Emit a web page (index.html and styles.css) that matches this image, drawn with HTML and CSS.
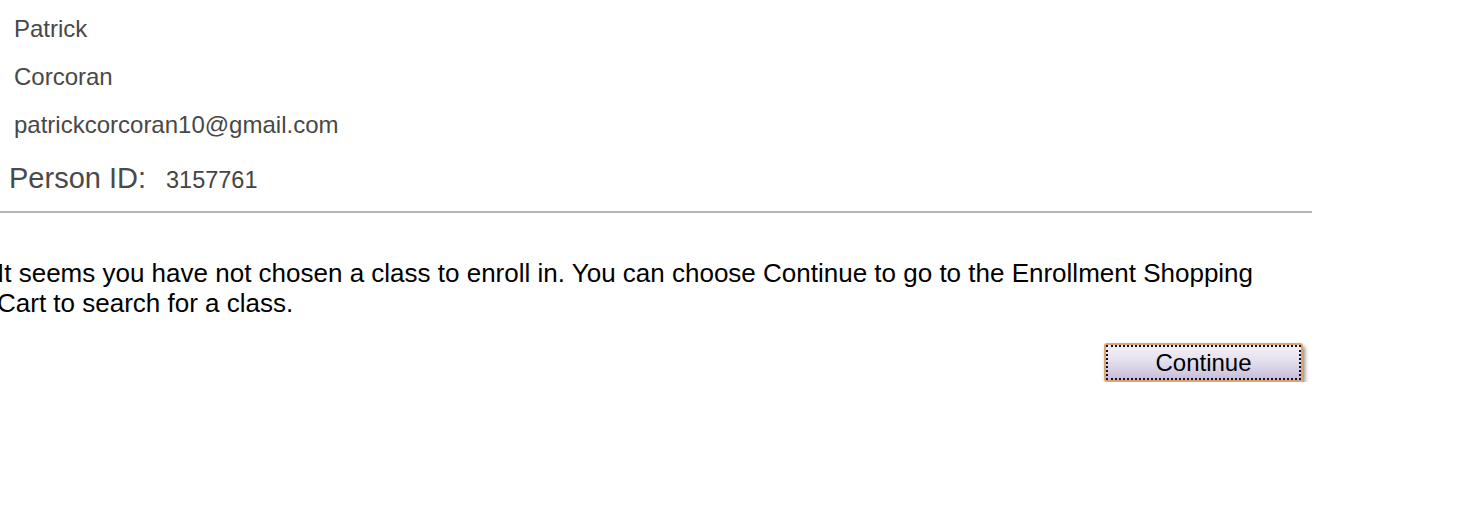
FILE: index.html
```html
<!DOCTYPE html>
<html lang="en">
<head>
<meta charset="utf-8">
<title>Enrollment</title>
<link rel="stylesheet" href="styles.css">
</head>
<body>
<div class="page">
  <div class="profile">
    <div class="field">Patrick</div>
    <div class="field">Corcoran</div>
    <div class="field">patrickcorcoran10@gmail.com</div>
    <div class="person">
      <span class="person-label">Person ID:</span>
      <span class="person-value">3157761</span>
    </div>
  </div>
  <hr class="divider">
  <p class="message">It seems you have not chosen a class to enroll in. You can choose Continue to go to the Enrollment Shopping Cart to search for a class.</p>
  <div class="actions">
    <button class="btn" type="button"><span class="btn-focus">Continue</span></button>
  </div>
</div>
</body>
</html>
```

FILE: styles.css
```css
html, body {
  margin: 0;
  padding: 0;
  background: #ffffff;
}

body {
  font-family: "Liberation Sans", Arial, Helvetica, sans-serif;
  overflow: hidden;
}

.page {
  width: 1312px;
}

.profile {
  padding-top: 5px;
  padding-left: 14px;
  color: #484848;
}

.field {
  font-size: 24px;
  line-height: 48px;
  height: 48px;
}

.person {
  display: flex;
  align-items: baseline;
  gap: 20px;
  margin-left: -5px;
  margin-top: 5px;
  height: 48px;
  line-height: 48px;
}

.person-label {
  font-size: 29px;
  color: #4a4a4a;
}

.person-value {
  font-size: 23.5px;
  color: #444444;
}

.divider {
  margin: 9px 0 0 0;
  border: 0;
  height: 2px;
  background: #b6b6b6;
}

.message {
  margin: 45px 0 0 -3px;
  width: 1300px;
  font-size: 26px;
  line-height: 30px;
  color: #000000;
}

.actions {
  display: flex;
  justify-content: flex-end;
  padding-right: 9px;
  margin-top: 25px;
}

.btn {
  width: 199px;
  height: 39px;
  padding: 0;
  border: 2px solid #dba474;
  border-radius: 3px;
  background: linear-gradient(#f4f2f8 0%, #e4e0ee 45%, #c5bcd9 100%);
  box-shadow: 2px 3px 4px rgba(0, 0, 0, 0.45);
  font-family: "Liberation Sans", Arial, Helvetica, sans-serif;
  font-size: 24px;
  color: #000000;
  cursor: pointer;
}

.btn-focus {
  display: flex;
  align-items: center;
  justify-content: center;
  height: 100%;
  box-sizing: border-box;
  border: 2px dotted #111111;
}
```
